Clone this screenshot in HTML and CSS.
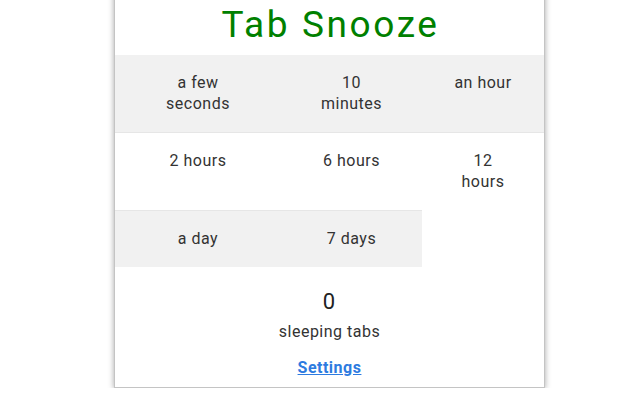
FILE: index.html
```html
<!DOCTYPE html>
<html lang="en">
<head>
    <meta charset="UTF-8">
    <meta name="viewport" content="width=device-width, initial-scale=1.0">
    <title>Tab Snooze</title>
    <link rel="stylesheet" href="styles.css">
</head>
<body>

    <div class="popup">
        <h1 class="title">Tab Snooze</h1>
        <div class="options">
            <div class="option shade">a few<br>seconds</div>
            <div class="option shade">10<br>minutes</div>
            <div class="option shade">an hour</div>
            <div class="option line">2 hours</div>
            <div class="option line">6 hours</div>
            <div class="option line">12<br>hours</div>
            <div class="option line shade">a day</div>
            <div class="option line shade">7 days</div>
            <div class="option line blank"></div>
        </div>
        <div class="sleeping">
            <div class="count">0</div>
            <div class="count-label">sleeping tabs</div>
            <a href="#" class="settings">Settings</a>
        </div>
    </div>

</body>
</html>
```
FILE: styles.css
```css
body {
    margin: 0;
    font-family: Roboto, "Liberation Sans", sans-serif;
    background: #fff;
}
.popup {
    width: 429px;
    margin: -10px 0 0 114px;
    border: 1px solid #c4c4c4;
    background: #fff;
    box-shadow: 0 1px 6px rgba(0, 0, 0, 0.35);
}
.title {
    margin: 0;
    padding: 9px 0 6px;
    font-size: 37px;
    line-height: 49px;
    font-weight: 400;
    letter-spacing: 2.6px;
    text-indent: 2px;
    color: #008000;
    text-align: center;
}
.options {
    display: grid;
    grid-template-columns: 166px 141px 1fr;
}
.option {
    padding: 17px 4px 18px;
    font-size: 16px;
    line-height: 21px;
    letter-spacing: 0.5px;
    color: #333;
    text-align: center;
    cursor: pointer;
}
.option.line {
    border-top: 1px solid #e6e6e6;
}
.option.shade {
    background: #f1f1f1;
}
.option.blank {
    border-top-color: #fff;
    cursor: default;
}
.sleeping {
    display: flex;
    flex-direction: column;
    align-items: center;
    padding: 21px 0 9px;
    color: #333;
}
.count {
    font-size: 22px;
    line-height: 28px;
    letter-spacing: 1px;
    color: #222;
}
.count-label {
    margin-top: 5px;
    font-size: 16px;
    line-height: 21px;
    letter-spacing: 0.5px;
}
.settings {
    margin-top: 15px;
    font-size: 16px;
    line-height: 21px;
    font-weight: 700;
    letter-spacing: 0.5px;
    color: #2d7be0;
}
```
